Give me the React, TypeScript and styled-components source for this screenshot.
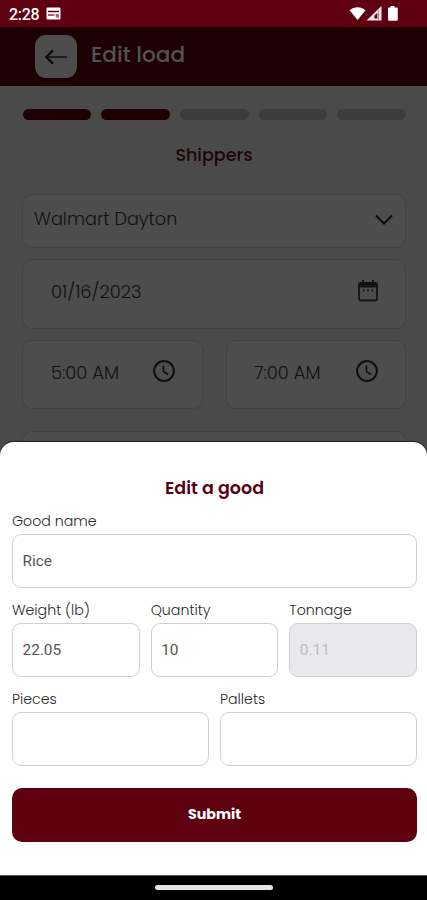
import React from "react";
import styled, { createGlobalStyle } from "styled-components";

const GlobalStyle = createGlobalStyle`
  * { box-sizing: border-box; }
  body { margin: 0; background: #000; }
  button, input { font: inherit; }
`;

const brandFont = `Poppins, Inter, "Open Sans", sans-serif`;

const Screen = styled.div`
  width: 427px;
  height: 900px;
  display: grid;
  grid-template-rows: 27px 415px 433px 25px;
  overflow: hidden;
  font-family: ${brandFont};
  background: #000;
`;

const StatusBar = styled.header`
  display: flex;
  align-items: center;
  justify-content: space-between;
  padding: 0 28px 0 9px;
  background: #5f0010;
  color: #fff;
`;

const StatusGroup = styled.div`
  display: flex;
  align-items: center;
`;

const Clock = styled.span`
  width: 37px;
  padding-top: 2px;
  font: 500 16px/25px Roboto, sans-serif;
  letter-spacing: -0.3px;
  white-space: nowrap;
`;

const Page = styled.main`
  background: #4a4a4a;
  height: 450px;
`;

const TopBar = styled.div`
  display: flex;
  height: 59px;
  padding: 8px 35px;
  gap: 14px;
  background: #1c0003;
`;

const BackButton = styled.button`
  display: grid;
  place-items: center;
  width: 42px;
  height: 43px;
  padding: 0;
  border: 0;
  border-radius: 11px;
  background: #4b4c4b;
`;

const Label = styled.span<{ $size: number; $weight?: number; $color?: string; $line?: number }>`
  font-size: ${(p) => p.$size}px;
  font-weight: ${(p) => p.$weight ?? 400};
  color: ${(p) => p.$color ?? "#111"};
  line-height: ${(p) => p.$line ?? 20}px;
  white-space: nowrap;
`;

const Steps = styled.div`
  display: grid;
  grid-template-columns: repeat(5, 1fr);
  gap: 10px;
  padding: 23px 21px 0 22.5px;
`;

const Step = styled.div<{ $done?: boolean }>`
  height: 11px;
  border-radius: 5.5px;
  background: ${(p) => (p.$done ? "#1e0004" : "#3c3c3c")};
`;

const Heading = styled.h2`
  display: flex;
  justify-content: center;
  margin: 0;
`;

const PageHeading = styled(Heading)`
  padding: 25px 0 0 1px;
  height: 74px;
`;

const Fields = styled.div`
  display: grid;
  grid-template-columns: 181px 180px;
  column-gap: 23px;
  padding-left: 22px;
`;

const DimField = styled.div<{ $height: number; $wide?: boolean; $inset: number; $end: number; $gap: number }>`
  grid-column: ${(p) => (p.$wide ? "1 / -1" : "auto")};
  display: flex;
  align-items: center;
  justify-content: space-between;
  height: ${(p) => p.$height}px;
  margin-bottom: ${(p) => p.$gap}px;
  padding: 0 ${(p) => p.$end}px 4px ${(p) => p.$inset}px;
  border: 1px solid #424242;
  border-radius: 10px;
  background: #4d4d4d;
`;

const Sheet = styled.section`
  position: relative;
  padding: 36px 10px 0 12px;
  border-radius: 14px 14px 0 0;
  background: #fff;
  box-shadow: 0 -1px 1px #222;
`;

const SheetHeading = styled(Heading)`
  height: 33px;
`;

const FormRow = styled.div<{ $columns: number }>`
  display: grid;
  grid-template-columns: repeat(${(p) => p.$columns}, 1fr);
  column-gap: 11px;
  height: 89px;
`;

const Field = styled.label`
  display: flex;
  flex-direction: column;
  min-width: 0;
`;

const Input = styled.input`
  width: 100%;
  height: 54px;
  margin-top: 3px;
  padding: 0 9.5px;
  border: 1px solid #cfcfcf;
  border-radius: 9px;
  outline: 0;
  background: #fff;
  color: #555;
  font: 400 15.4px Roboto, sans-serif;
  &:disabled {
    background: #e9e8ed;
    color: #bdbdc0;
  }
`;

const SubmitButton = styled.button`
  width: 100%;
  height: 54px;
  margin-top: 10px;
  padding: 0 0 4px;
  border: 0;
  border-radius: 10px;
  background: #5f000f;
`;

const NavigationBar = styled.footer`
  display: flex;
  justify-content: center;
  padding-top: 9px;
  border-top: 1px solid #555;
  background: #000;
`;

const HomeHandle = styled.div`
  width: 118px;
  height: 5px;
  border-radius: 3px;
  background: #e5e5e5;
`;

const NewsIcon = () => (
  <svg width="15" height="13" viewBox="0 0 15 13">
    <rect x=".5" y=".5" width="14" height="12" rx="1.2" fill="#fff" />
    <path d="M2 4.5h11" stroke="#5f0010" strokeWidth="1.5" />
    <path d="M2 8h6.5" stroke="#5f0010" strokeWidth="1.2" />
    <path d="M9.7 7h3.3v3.4H9.7z" fill="#a8606a" />
  </svg>
);

const SignalIcons = () => (
  <svg width="50" height="16" viewBox="0 0 50 16">
    <path d="M.5 4.2C5 .1 12 .1 16.6 4.2L8.6 14z" fill="#fff" />
    <path d="M32.5 0v14.5h-15z" fill="#f5e8ea" />
    <path d="M25.4 9.8l3-3v5.7h-3z" fill="#5f0010" />
    <path d="M29.6 4v10" stroke="#b98089" strokeWidth="1" />
    <path d="M41.5 0h4v1.5h2q1.3 0 1.3 1.3v10.4q0 1.5-1.3 1.5h-7.2q-1.3 0-1.3-1.5V2.8q0-1.3 1.3-1.3h1.2z" fill="#fff" />
  </svg>
);

const BackArrow = () => (
  <svg width="24" height="18" viewBox="0 0 24 18" fill="none">
    <path d="M2.5 9H23" stroke="#1b1b1b" strokeWidth="1.8" />
    <path d="M9 2.2L2.3 9 9 15.8" stroke="#090909" strokeWidth="2.2" />
  </svg>
);

const Chevron = () => (
  <svg width="18" height="12" viewBox="0 0 18 12" fill="none" stroke="#0c0c0c" strokeWidth="2">
    <path d="M1 2.5l8 8 8-8" />
  </svg>
);

const CalendarIcon = () => (
  <svg width="20" height="24" viewBox="0 0 20 24" fill="none" stroke="#141414">
    <rect x="1" y="3" width="18" height="17.5" rx="2" strokeWidth="1.8" />
    <path d="M1 3h18v4H1z" fill="#141414" strokeWidth="1" />
    <path d="M5 0v4M15 0v4" strokeWidth="2" />
    <path d="M4.8 10.3h1.8M9.1 10.3h1.8M13.4 10.3h1.8" strokeWidth="1.8" />
  </svg>
);

const ClockIcon = () => (
  <svg width="22" height="25" viewBox="0 0 22 25" fill="none" stroke="#101010">
    <circle cx="11" cy="11" r="9.9" strokeWidth="2" />
    <path d="M10.5 5.5v6.2l4.7 2.8" strokeWidth="1.6" />
  </svg>
);

type GoodFieldProps = { label: string; value?: string; disabled?: boolean };

const GoodField = ({ label, value = "", disabled }: GoodFieldProps) => (
  <Field>
    <Label $size={14.2} $weight={300} $color="#2a2a2a">{label}</Label>
    <Input defaultValue={value} disabled={disabled} />
  </Field>
);

export default function App() {
  return (
    <Screen>
      <GlobalStyle />
      <StatusBar>
        <StatusGroup>
          <Clock>2:28</Clock>
          <NewsIcon />
        </StatusGroup>
        <SignalIcons />
      </StatusBar>

      <Page>
        <TopBar>
          <BackButton aria-label="Back"><BackArrow /></BackButton>
          <Label $size={21.6} $weight={500} $color="#555152" $line={40}>Edit load</Label>
        </TopBar>
        <Steps>
          <Step $done /><Step $done /><Step /><Step /><Step />
        </Steps>
        <PageHeading>
          <Label $size={17.5} $weight={500} $color="#1e0509">Shippers</Label>
        </PageHeading>
        <Fields>
          <DimField $wide $height={54} $inset={11} $end={12} $gap={11}>
            <Label $size={17.7} $weight={300} $line={22}>Walmart Dayton</Label>
            <Chevron />
          </DimField>
          <DimField $wide $height={70} $inset={28} $end={27} $gap={11}>
            <Label $size={17.9} $weight={300}>01/16/2023</Label>
            <CalendarIcon />
          </DimField>
          <DimField $height={69} $inset={28} $end={27} $gap={22}>
            <Label $size={17.9} $weight={300}>5:00 AM</Label>
            <ClockIcon />
          </DimField>
          <DimField $height={69} $inset={27} $end={27} $gap={22}>
            <Label $size={17.9} $weight={300}>7:00 AM</Label>
            <ClockIcon />
          </DimField>
          <DimField $wide $height={54} $inset={11} $end={12} $gap={0} />
        </Fields>
      </Page>

      <Sheet>
        <SheetHeading>
          <Label $size={17.5} $weight={600} $color="#5b0010">Edit a good</Label>
        </SheetHeading>
        <FormRow $columns={1}>
          <GoodField label="Good name" value="Rice" />
        </FormRow>
        <FormRow $columns={3}>
          <GoodField label="Weight (lb)" value="22.05" />
          <GoodField label="Quantity" value="10" />
          <GoodField label="Tonnage" value="0.11" disabled />
        </FormRow>
        <FormRow $columns={2}>
          <GoodField label="Pieces" />
          <GoodField label="Pallets" />
        </FormRow>
        <SubmitButton>
          <Label $size={14.2} $weight={700} $color="#fff">Submit</Label>
        </SubmitButton>
      </Sheet>

      <NavigationBar><HomeHandle /></NavigationBar>
    </Screen>
  );
}
